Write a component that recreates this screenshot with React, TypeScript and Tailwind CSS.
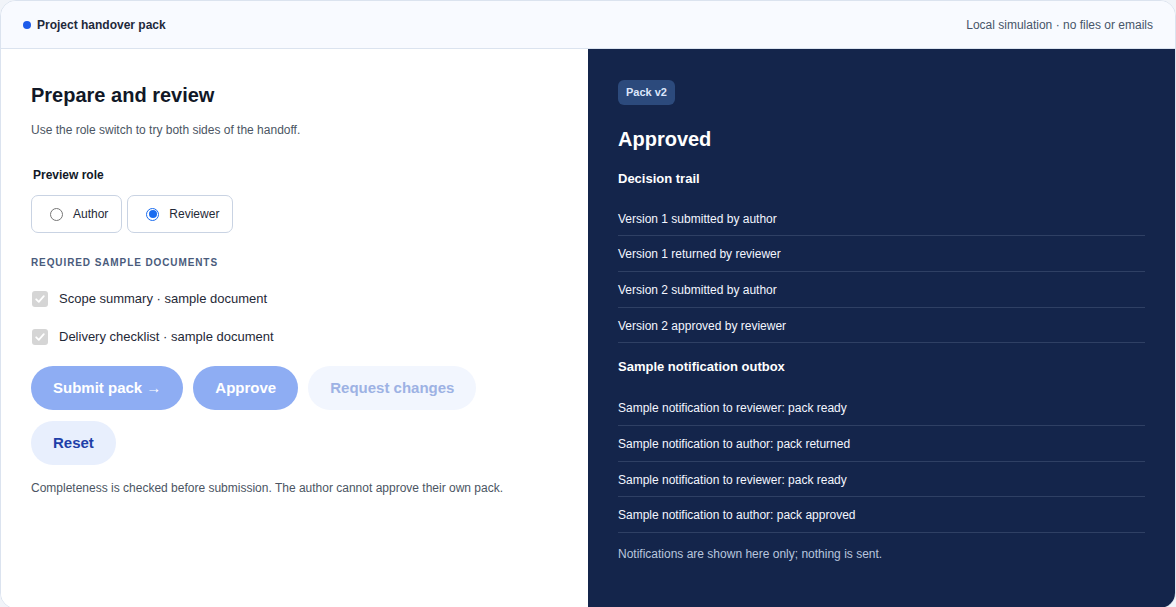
import React from "react";

const trail = [
  "Version 1 submitted by author",
  "Version 1 returned by reviewer",
  "Version 2 submitted by author",
  "Version 2 approved by reviewer",
];
const outbox = [
  "Sample notification to reviewer: pack ready",
  "Sample notification to author: pack returned",
  "Sample notification to reviewer: pack ready",
  "Sample notification to author: pack approved",
];

function Check({ label }: { label: string }) {
  return (
    <div className="flex items-center gap-[11px] h-[22px]">
      <span className="ml-px w-4 h-4 rounded-[3px] bg-[#d5d5d5] flex items-center justify-center">
        <svg width="12" height="12" viewBox="0 0 12 12" fill="none">
          <path d="M2.2 6.3 L4.8 8.8 L9.8 3.2" stroke="#ffffff" strokeWidth="1.8" strokeLinecap="round" strokeLinejoin="round" />
        </svg>
      </span>
      <span className="text-[13px] text-[#1f2937]">{label}</span>
    </div>
  );
}

function Radio({ label, checked }: { label: string; checked?: boolean }) {
  return (
    <label className="flex items-center h-[38px] pl-[18px] pr-[13px] gap-[10px] border border-[#c9d3e3] rounded-[7px] bg-white">
      <span
        className={
          checked
            ? "w-[13px] h-[13px] rounded-full border border-[#1a6cf0] flex items-center justify-center"
            : "w-[13px] h-[13px] rounded-full border border-[#767676]"
        }
      >
        {checked ? <span className="w-[8px] h-[8px] rounded-full bg-[#1a6cf0]" /> : null}
      </span>
      <span className="text-[12px] text-[#1f2937]">{label}</span>
    </label>
  );
}

export default function App() {
  return (
    <div className="min-h-[607px] bg-[#f1f4f9] font-['Liberation_Sans',Arial,sans-serif]">
      <div className="border border-[#dbe3ef] rounded-2xl overflow-hidden bg-white">
        <header className="h-[48px] flex items-center justify-between px-[22px] bg-[#f8faff] border-b border-[#dbe3ef]">
          <div className="flex items-center gap-[6px]">
            <span className="w-2 h-2 rounded-full bg-[#1d5bea]" />
            <span className="text-[12px] font-bold text-[#1e293b]">Project handover pack</span>
          </div>
          <span className="text-[12px] text-[#475569]">Local simulation · no files or emails</span>
        </header>
        <div className="grid grid-cols-2">
          <section className="px-[30px] pt-8 bg-white">
            <h2 className="text-[20px] leading-[28px] font-bold text-[#111827]">Prepare and review</h2>
            <p className="mt-3 text-[12px] leading-[18px] text-[#4b5563]">
              Use the role switch to try both sides of the handoff.
            </p>
            <div className="mt-[27px] pl-[2px] text-[12px] leading-[18px] font-bold text-[#111827]">Preview role</div>
            <div className="mt-[11px] flex gap-[5px]">
              <Radio label="Author" />
              <Radio label="Reviewer" checked />
            </div>
            <div className="mt-[23px] text-[10px] leading-[14px] font-bold tracking-[0.09em] text-[#4a5b7c]">
              REQUIRED SAMPLE DOCUMENTS
            </div>
            <div className="mt-[18px] flex flex-col gap-4">
              <Check label="Scope summary · sample document" />
              <Check label="Delivery checklist · sample document" />
            </div>
            <div className="mt-[18px] flex flex-wrap gap-x-[10px] gap-y-[11px]">
              <button className="h-[44px] px-[22px] rounded-full bg-[#8eadf3] text-white text-[15px] font-bold">
                Submit pack →
              </button>
              <button className="h-[44px] px-[22px] rounded-full bg-[#8eadf3] text-white text-[15px] font-bold">
                Approve
              </button>
              <button className="h-[44px] px-[22px] rounded-full bg-[#f2f6fe] text-[#9db2e4] text-[15px] font-bold">
                Request changes
              </button>
              <button className="h-[44px] px-[22px] rounded-full bg-[#e8effd] text-[#1e3fa8] text-[15px] font-bold">
                Reset
              </button>
            </div>
            <p className="mt-[14px] text-[12px] leading-[18px] text-[#4b5563]">
              Completeness is checked before submission. The author cannot approve their own pack.
            </p>
          </section>
          <section className="bg-[#14254b] px-[30px] pt-[30px] pb-[45px] text-[#f3f6ff]">
            <span className="inline-flex items-center h-[25px] px-2 rounded-md bg-[#2c4a7c] text-[11px] font-bold text-[#dce6fb]">
              Pack v2
            </span>
            <h2 className="mt-5 text-[20px] leading-[28px] font-bold text-white">Approved</h2>
            <h3 className="mt-[17px] text-[13px] leading-[18px] font-bold text-white">Decision trail</h3>
            <ul className="mt-[13px]">
              {trail.map((t, i) => (
                <li key={i} className="pt-[9px] pb-[7.67px] text-[12px] leading-[18px] border-b border-[#2f4064]">
                  {t}
                </li>
              ))}
            </ul>
            <h3 className="mt-[15px] text-[13px] leading-[18px] font-bold text-white">Sample notification outbox</h3>
            <ul className="mt-[14px]">
              {outbox.map((t, i) => (
                <li key={i} className="pt-[9px] pb-[7.67px] text-[12px] leading-[18px] border-b border-[#2f4064]">
                  {t}
                </li>
              ))}
            </ul>
            <p className="mt-[12px] text-[12px] leading-[18px] text-[#b8c5de]">
              Notifications are shown here only; nothing is sent.
            </p>
          </section>
        </div>
      </div>
    </div>
  );
}
